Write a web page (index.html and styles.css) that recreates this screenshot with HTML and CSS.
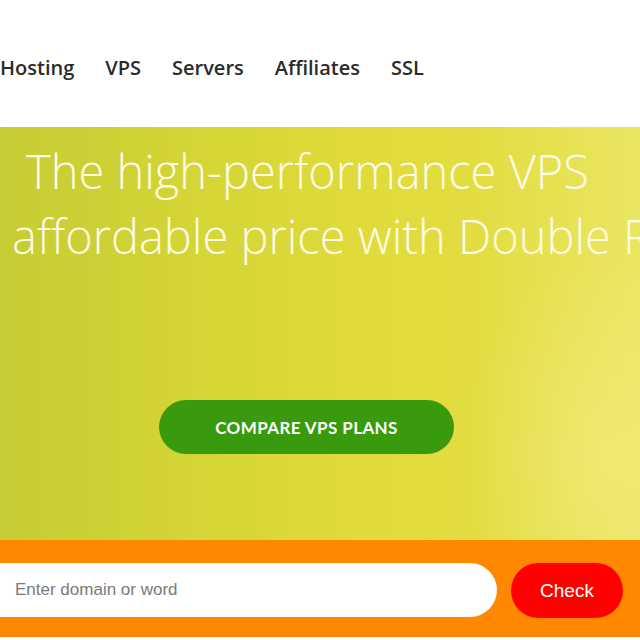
FILE: index.html
```html
<!DOCTYPE html>
<html>
<head>
<meta charset="utf-8">
<link rel="stylesheet" href="styles.css">
</head>
<body>
<header class="topbar">
  <nav class="nav">
    <a class="nav-item">Hosting</a>
    <a class="nav-item">VPS</a>
    <a class="nav-item">Servers</a>
    <a class="nav-item">Affiliates</a>
    <a class="nav-item">SSL</a>
  </nav>
</header>
<section class="hero">
  <h1 class="hero-title">
    <span class="line line-1">The high-performance VPS</span>
    <span class="line line-2">affordable price with Double RAM</span>
  </h1>
  <a class="cta">COMPARE VPS PLANS</a>
</section>
<section class="domain">
  <div class="domain-input">Enter domain or word</div>
  <button class="domain-btn">Check</button>
</section>
</body>
</html>
```
FILE: styles.css
```css
html, body {
  margin: 0;
  padding: 0;
  background: #ffffff;
  overflow: hidden;
}
body {
  width: 640px;
  height: 640px;
  font-family: "Open Sans", "Liberation Sans", sans-serif;
}
.topbar {
  height: 127px;
  background: #ffffff;
  box-sizing: border-box;
  padding-top: 53px;
}
.nav {
  display: flex;
  gap: 31px;
}
.nav-item {
  font-size: 20px;
  font-weight: 600;
  color: #2b2b2b;
  line-height: 30px;
}
.hero {
  height: 413px;
  box-sizing: border-box;
  padding-top: 12px;
  overflow: hidden;
  white-space: nowrap;
  background:
    radial-gradient(ellipse 200px 300px at 600px 330px, rgba(255,255,200,0.22), rgba(255,255,200,0) 70%),
    linear-gradient(90deg, #c6cc33 0%, #d4d536 30%, #e0da3a 55%, #e3dd42 75%, #ebe662 100%);
}
.hero-title {
  margin: 0;
  font-weight: 300;
  font-size: 47px;
  line-height: 65px;
  color: #fdfbe6;
}
.line {
  display: block;
}
.line-1 {
  padding-left: 26px;
}
.line-2 {
  padding-left: 12px;
}
.cta {
  display: flex;
  align-items: center;
  justify-content: center;
  margin-top: 131px;
  margin-left: 159px;
  width: 295px;
  height: 54px;
  border-radius: 27px;
  background: #389a0c;
  color: #ffffff;
  font-family: "Lato", "Liberation Sans", sans-serif;
  font-weight: 700;
  font-size: 17px;
  letter-spacing: 0.4px;
}
.domain {
  height: 97px;
  box-sizing: border-box;
  padding-top: 23px;
  background: #ff8800;
  display: flex;
  align-items: flex-start;
  gap: 14px;
}
.domain-input {
  width: 527px;
  height: 54px;
  margin-left: -30px;
  padding-left: 45px;
  box-sizing: border-box;
  background: #ffffff;
  border-radius: 27px;
  display: flex;
  align-items: center;
  font-family: "Liberation Sans", Arial, sans-serif;
  font-size: 17px;
  color: #7a7a7a;
}
.domain-btn {
  width: 112px;
  height: 55px;
  border: none;
  border-radius: 28px;
  background: #ff0000;
  color: #ffffff;
  font-family: "Liberation Sans", Arial, sans-serif;
  font-size: 19px;
  padding: 0;
}
```
